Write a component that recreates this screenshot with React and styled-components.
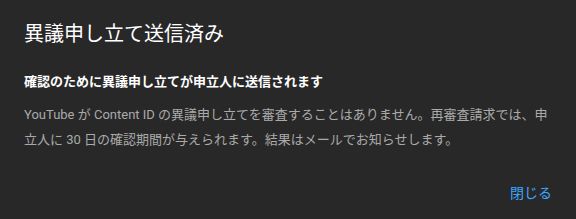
import React from 'react';
import styled, { createGlobalStyle } from 'styled-components';

const GlobalStyle = createGlobalStyle`
  html, body {
    margin: 0;
    padding: 0;
    background: #282828;
  }
  body {
    font-family: Roboto, "Noto Sans CJK JP", sans-serif;
  }
`;

const Dialog = styled.div`
  box-sizing: border-box;
  width: 576px;
  height: 219px;
  background: #282828;
  padding: 20px 24px 0 24px;
  display: flex;
  flex-direction: column;
`;

const Title = styled.h2`
  margin: 0;
  font-size: 20px;
  line-height: 28px;
  font-weight: 400;
  color: #ffffff;
`;

const Heading = styled.div`
  margin-top: 24px;
  font-size: 13px;
  line-height: 20px;
  font-weight: 700;
  color: #ffffff;
`;

const Body = styled.p`
  margin: 10px 0 0 0;
  font-size: 13px;
  line-height: 25px;
  color: #aaaaaa;
`;

const Actions = styled.div`
  margin-top: auto;
  padding-bottom: 13px;
  display: flex;
  justify-content: flex-end;
`;

const TextButton = styled.button`
  background: none;
  border: none;
  padding: 4px 0;
  font-family: inherit;
  font-size: 14px;
  color: #3ea6ff;
  cursor: pointer;
`;

export default function App() {
  return (
    <>
      <GlobalStyle />
      <Dialog>
        <Title>異議申し立て送信済み</Title>
        <Heading>確認のために異議申し立てが申立人に送信されます</Heading>
        <Body>
          YouTube が Content ID の異議申し立てを審査することはありません。再審査請求では、申立人に 30 日の確認期間が与えられます。結果はメールでお知らせします。
        </Body>
        <Actions>
          <TextButton>閉じる</TextButton>
        </Actions>
      </Dialog>
    </>
  );
}
